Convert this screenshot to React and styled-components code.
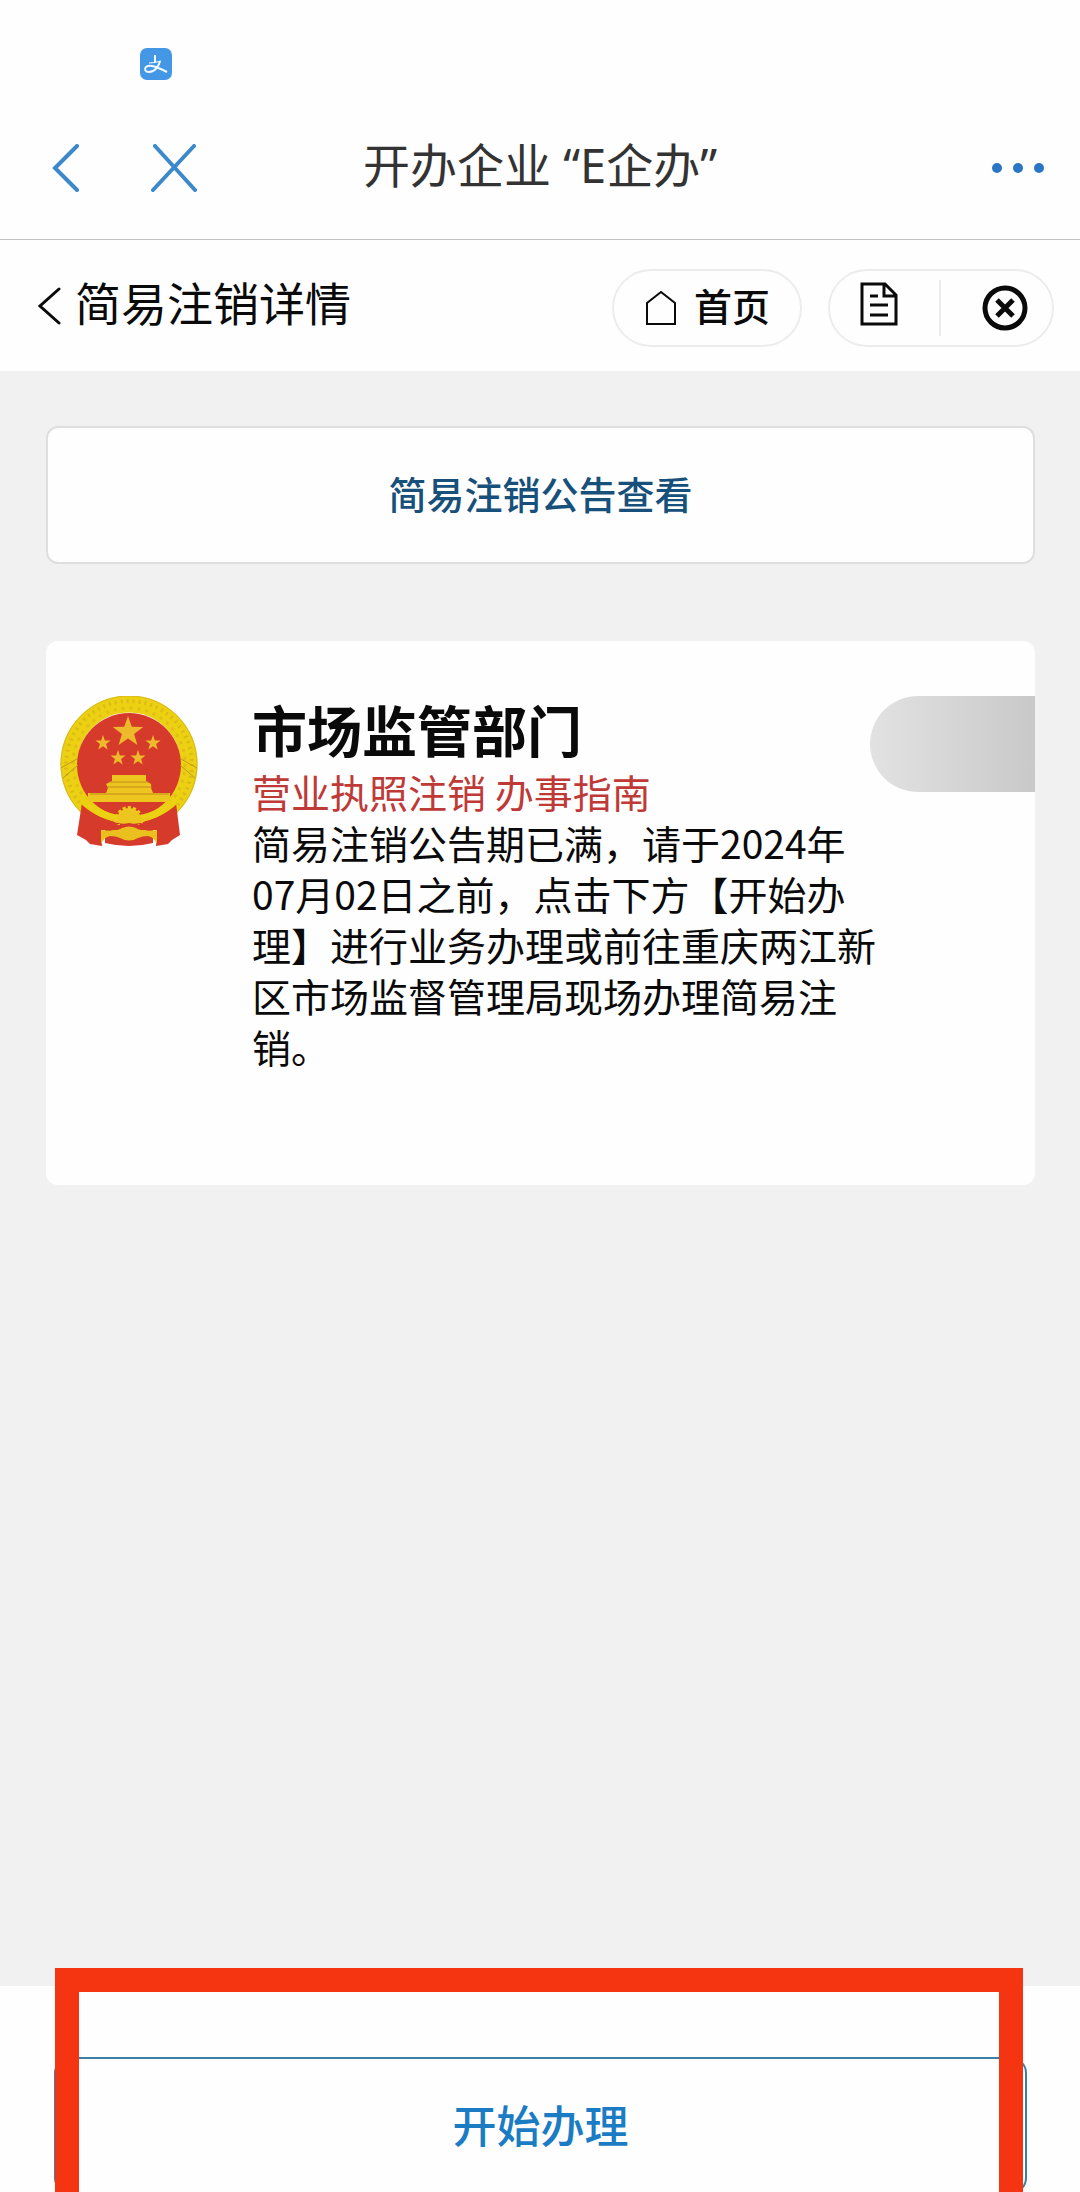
import React from "react";
import styled, { createGlobalStyle } from "styled-components";

const GlobalStyle = createGlobalStyle`
  * {
    box-sizing: border-box;
  }

  body {
    margin: 0;
    background: #fefefe;
    color: #0a0a0a;
    font-family: "Noto Sans CJK SC", sans-serif;
  }

  button {
    padding: 0;
    border: none;
    background: none;
    color: inherit;
    font-family: inherit;
    white-space: nowrap;
    cursor: pointer;
  }

  svg {
    display: block;
  }
`;

const Page = styled.div`
  display: flex;
  flex-direction: column;
  min-height: 100vh;
  overflow: hidden;
`;

const StatusBar = styled.div`
  height: 96px;
  padding: 48px 140px 0;
`;

const NavBar = styled.header`
  display: grid;
  grid-template-columns: 1fr auto 1fr;
  align-items: center;
  height: 144px;
  padding: 0 36px;
  border-bottom: 1px solid #c4c4c4;
`;

const NavActions = styled.div`
  display: flex;
  align-items: center;
  gap: 72px;
  margin-left: 16px;
  color: #3b88cb;
`;

const NavTitle = styled.h1`
  margin: 0;
  padding-bottom: 6px;
  color: #333;
  font-family: "Noto Sans", "Noto Sans CJK SC", sans-serif;
  font-size: 47px;
  font-weight: 400;
  line-height: 64px;
`;

const MoreButton = styled.button`
  justify-self: end;
  color: #2a76c4;
`;

const SubBar = styled.div`
  display: flex;
  align-items: center;
  justify-content: space-between;
  height: 131px;
  padding: 4px 26px 0 37px;
`;

const BackButton = styled.button`
  display: flex;
  align-items: center;
  gap: 14px;
  padding-bottom: 4px;
  font-size: 46px;
  line-height: 64px;
`;

const BackLabel = styled.span`
  padding-bottom: 10px;
`;

const Pills = styled.div`
  display: flex;
  gap: 26px;
`;

const Pill = styled.div`
  display: flex;
  align-items: center;
  justify-content: space-between;
  height: 78px;
  padding: 0 ${(props) => (props.$wide ? "24px 0 30px" : "28px 0 32px")};
  width: ${(props) => (props.$wide ? "226px" : "190px")};
  border: 2px solid #ececec;
  border-radius: 39px;
`;

const HomeButton = styled.button`
  display: flex;
  align-items: center;
  gap: 18px;
  font-size: 38px;
  font-weight: 500;
  line-height: 50px;
`;

const HomeLabel = styled.span`
  padding-bottom: 6px;
`;

const RecordsButton = styled.button`
  padding-bottom: 8px;
`;

const PillDivider = styled.span`
  width: 2px;
  height: 56px;
  background: #ebebeb;
`;

const Main = styled.main`
  flex: 1;
  display: flex;
  flex-direction: column;
  gap: 77px;
  padding: 55px 45px 55px 46px;
  background: #f1f1f1;
`;

const NoticeButton = styled.button`
  height: 138px;
  padding-bottom: 6px;
  border: 2px solid #dedede;
  border-radius: 12px;
  background: #fefefe;
  color: #17507a;
  font-size: 38px;
  font-weight: 500;
`;

const Card = styled.section`
  position: relative;
  display: flex;
  align-items: flex-start;
  min-height: 544px;
  padding: 55px 14px;
  border-radius: 12px;
  background: #fefefe;
`;

const CardBody = styled.div`
  flex: 1;
  margin-left: 54px;
`;

const Department = styled.h2`
  margin: 0 0 6px;
  font-size: 55px;
  font-weight: 700;
  line-height: 64px;
`;

const GuideLink = styled.a`
  display: block;
  color: #bf3a37;
  font-size: 39px;
  line-height: 51px;
  text-decoration: none;
`;

const Message = styled.p`
  margin: 0;
  max-width: 16em;
  font-size: 39px;
  line-height: 51px;
`;

const Badge = styled.div`
  position: absolute;
  top: 55px;
  right: 0;
  width: 165px;
  height: 96px;
  border-radius: 48px 0 0 48px;
  background: linear-gradient(90deg, #e2e2e2, #c9c9c9);
`;

const Footer = styled.footer`
  position: relative;
  display: flex;
  padding: 71px 53px 0 54px;
  background: #fefefe;
`;

const StartButton = styled.button`
  flex: 1;
  height: 137px;
  margin-bottom: -2px;
  padding-bottom: 4px;
  border: 2px solid #3a7fa6;
  border-radius: 16px;
  color: #1b7cc4;
  font-size: 44px;
  font-weight: 500;
`;

const Highlight = styled.div`
  position: absolute;
  top: -18px;
  right: 57px;
  bottom: 0;
  left: 55px;
  border: 24px solid #f53411;
  border-bottom: none;
  pointer-events: none;
`;

const AlipayIcon = () => (
  <svg width="32" height="32" viewBox="0 0 32 32" fill="none">
    <rect width="32" height="32" rx="7" fill="#4497e4" />
    <g stroke="#f2fbff" strokeWidth="2">
      <path d="M15 7v7" />
      <path d="M9 15q6 0 12-2" strokeWidth="1" />
      <path d="M20 13c-1 5-5 11-11 11-4 0-5-3-3-5 4-3 11 0 21 5" />
    </g>
  </svg>
);

const ChevronIcon = ({ width, height, strokeWidth }) => (
  <svg width={width} height={height} viewBox={`0 0 ${width} ${height}`}>
    <path
      d={`M${width - 2} 2L3 ${height / 2}L${width - 2} ${height - 2}`}
      fill="none"
      stroke="currentColor"
      strokeWidth={strokeWidth}
      strokeLinecap="round"
    />
  </svg>
);

const CrossIcon = () => (
  <svg width="46" height="48" viewBox="0 0 46 48">
    <path
      d="M4 2L44 46M43 2L2 46"
      stroke="currentColor"
      strokeWidth="4"
      strokeLinecap="round"
    />
  </svg>
);

const DotsIcon = () => (
  <svg width="52" height="10" viewBox="0 0 52 10" fill="currentColor">
    <circle cx="5" cy="5" r="5" />
    <circle cx="26" cy="5" r="5" />
    <circle cx="47" cy="5" r="5" />
  </svg>
);

const HomeIcon = () => (
  <svg width="30" height="34" viewBox="0 0 30 34">
    <path
      d="M1 12L15 1L29 12V33H1Z"
      fill="none"
      stroke="currentColor"
      strokeWidth="2"
    />
  </svg>
);

const DocIcon = () => (
  <svg width="38" height="44" viewBox="0 0 38 44">
    <path
      d="M2 2H25L36 13V42H2ZM24 2V14H36M10 14H18M10 23H28M10 33H28"
      fill="none"
      stroke="currentColor"
      strokeWidth="3"
    />
  </svg>
);

const CloseIcon = () => (
  <svg width="46" height="46" viewBox="0 0 46 46">
    <g fill="none" stroke="currentColor">
      <circle cx="23" cy="23" r="20" strokeWidth="5" />
      <path d="M15 15L31 31M31 15L15 31" strokeWidth="5" />
    </g>
  </svg>
);

const starPoints = (cx, cy, r) =>
  Array.from({ length: 10 }, (_, i) => {
    const radius = i % 2 ? r * 0.4 : r;
    const angle = (Math.PI / 5) * i - Math.PI / 2;
    return `${cx + radius * Math.cos(angle)},${cy + radius * Math.sin(angle)}`;
  }).join(" ");

const stars = [
  [68, 36, 16],
  [43, 47, 8],
  [93, 47, 8],
  [58, 62, 8],
  [78, 62, 8],
];

const EmblemIcon = () => (
  <svg width="138" height="150" viewBox="0 0 138 150">
    <path d="M45 130H93V147Q69 153 45 147Z" fill="#d63a2b" />
    <circle cx="69" cy="68" r="60" fill="none" stroke="#ecd012" strokeWidth="17" />
    <circle
      cx="69"
      cy="68"
      r="63"
      fill="none"
      stroke="#dcbb18"
      strokeWidth="4"
      strokeDasharray="2 4"
    />
    <circle
      cx="69"
      cy="68"
      r="56"
      fill="none"
      stroke="#e0c016"
      strokeWidth="3"
      strokeDasharray="3 5"
    />
    <circle cx="69" cy="68" r="68" fill="none" stroke="#d8b821" />
    <circle cx="69" cy="69" r="52" fill="#d63a2b" />
    <path d="M1 72L17 63M3 82L18 69M137 72L121 63M135 82L120 69" stroke="#c09c1c" />
    {stars.map(([cx, cy, r]) => (
      <polygon key={`${cx}-${cy}`} points={starPoints(cx, cy, r)} fill="#efb92d" />
    ))}
    <path
      d="M52 79H86V85L91 88V92L93 97H110V106H28V97H46L48 92L46 88L52 85Z"
      fill="#ecc51f"
    />
    <path d="M50 86H89M47 91H92M30 98H109" stroke="#c58a1c" />
    <path
      d="M22 107Q42 128 69 126Q96 128 116 107L120 139L112 144L108 148L96 150L97 134H41L42 150L30 148L26 144L17 139Z"
      fill="#d63a2b"
    />
    <path
      d="M22 104Q40 122 69 124Q98 122 116 104"
      fill="none"
      stroke="#ecd012"
      strokeWidth="7"
    />
    <circle
      cx="69"
      cy="124"
      r="12"
      fill="none"
      stroke="#ecd012"
      strokeWidth="4"
      strokeDasharray="3 2"
    />
    <path d="M57 124A12 12 0 0 1 81 124L92 121Q80 130 69 127Q58 130 46 121Z" fill="#ecc51f" />
    <path d="M46 127Q60 131 69 127Q78 131 92 127L90 133H48Z" fill="#d63a2b" />
    <path
      d="M41 148V134Q56 136 62 132Q69 129 76 132Q82 136 97 134V148Q94 141 88 140Q82 140 78 142Q69 147 60 142Q56 140 50 140Q44 141 41 148Z"
      fill="#e9c01d"
    />
  </svg>
);

const App = () => {
  return (
    <Page>
      <GlobalStyle />
      <StatusBar>
        <AlipayIcon />
      </StatusBar>
      <NavBar>
        <NavActions>
          <button aria-label="返回">
            <ChevronIcon width={27} height={48} strokeWidth={4} />
          </button>
          <button aria-label="关闭">
            <CrossIcon />
          </button>
        </NavActions>
        <NavTitle>开办企业 “E企办”</NavTitle>
        <MoreButton aria-label="更多">
          <DotsIcon />
        </MoreButton>
      </NavBar>
      <SubBar>
        <BackButton>
          <ChevronIcon width={24} height={38} strokeWidth={3} />
          <BackLabel>简易注销详情</BackLabel>
        </BackButton>
        <Pills>
          <Pill>
            <HomeButton>
              <HomeIcon />
              <HomeLabel>首页</HomeLabel>
            </HomeButton>
          </Pill>
          <Pill $wide>
            <RecordsButton aria-label="办件记录">
              <DocIcon />
            </RecordsButton>
            <PillDivider />
            <button aria-label="退出">
              <CloseIcon />
            </button>
          </Pill>
        </Pills>
      </SubBar>

      <Main>
        <NoticeButton>简易注销公告查看</NoticeButton>
        <Card>
          <EmblemIcon />
          <CardBody>
            <Department>市场监管部门</Department>
            <GuideLink href="#guide">营业执照注销 办事指南</GuideLink>
            <Message>
              简易注销公告期已满，请于2024年07月02日之前，点击下方【开始办理】进行业务办理或前往重庆两江新区市场监督管理局现场办理简易注销。
            </Message>
          </CardBody>
          <Badge />
        </Card>
      </Main>

      <Footer>
        <StartButton>开始办理</StartButton>
        <Highlight />
      </Footer>
    </Page>
  );
};

export default App;
